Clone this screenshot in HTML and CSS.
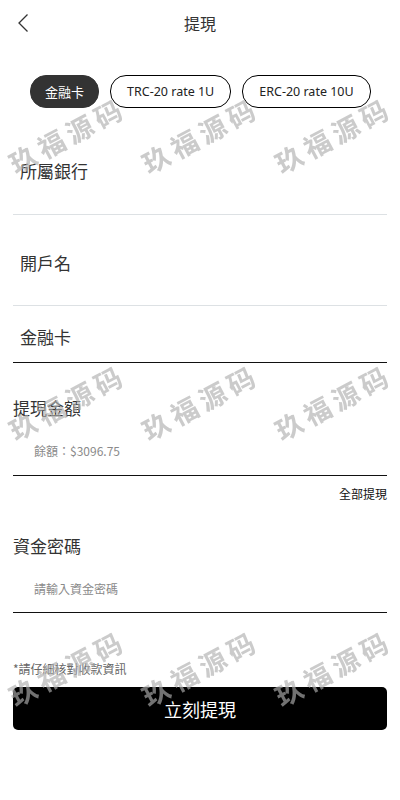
FILE: index.html
```html
<!DOCTYPE html>
<html lang="zh-Hant">
<head>
    <meta charset="UTF-8">
    <meta name="viewport" content="width=device-width, initial-scale=1.0">
    <title>提現</title>
    <link rel="stylesheet" href="styles.css">
</head>
<body>
    <div class="header">
        <a class="back" href="#">
            <svg width="14" height="20" viewBox="0 0 14 20">
                <path d="M10.5 1.5 L2 10 L10.5 18.5" fill="none" stroke="#333" stroke-width="1.3"/>
            </svg>
        </a>
        <div class="title">提現</div>
    </div>

    <div class="tabs">
        <div class="tab active">金融卡</div>
        <div class="tab">TRC-20 rate 1U</div>
        <div class="tab">ERC-20 rate 10U</div>
    </div>

    <div class="field field-bank">所屬銀行</div>
    <div class="field field-name">開戶名</div>
    <div class="field field-card">金融卡</div>

    <div class="section-label amount-label">提現金額</div>
    <div class="sub-input">餘額：$3096.75</div>
    <div class="all-link">全部提現</div>

    <div class="section-label pwd-label">資金密碼</div>
    <div class="sub-input">請輸入資金密碼</div>

    <div class="note">*請仔細核對收款資訊</div>
    <button class="submit">立刻提現</button>

    <div class="watermarks">
        <span>玖福源码</span><span>玖福源码</span><span>玖福源码</span>
        <span>玖福源码</span><span>玖福源码</span><span>玖福源码</span>
        <span>玖福源码</span><span>玖福源码</span><span>玖福源码</span>
    </div>
</body>
</html>
```

FILE: styles.css
```css
body {
    margin: 0;
    padding: 0 13px;
    background: #fff;
    color: #333;
    font-family: "Noto Sans CJK TC", "Noto Sans", sans-serif;
}

.header {
    position: relative;
    height: 46px;
    display: flex;
    align-items: center;
    justify-content: center;
}

.back {
    position: absolute;
    left: 4px;
    top: 13px;
    display: block;
    line-height: 0;
}

.title {
    font-size: 16px;
    color: #333;
}

.tabs {
    display: flex;
    gap: 11px;
    margin-top: 29px;
    padding-left: 17px;
}

.tab {
    height: 31px;
    line-height: 31px;
    padding: 0 16px;
    border: 1px solid #000;
    border-radius: 16px;
    font-size: 12.5px;
    color: #222;
    font-family: "Noto Sans", "Noto Sans CJK TC", sans-serif;
}

.tab.active {
    padding: 0 14px;
    background: #333;
    border-color: #333;
    color: #fff;
    font-size: 13px;
    font-family: "Noto Sans CJK TC", sans-serif;
}

.field {
    font-size: 17px;
    line-height: 24px;
    padding-left: 7px;
    color: #333;
    border-bottom: 1px solid #dde1e4;
}

.field-bank {
    padding-top: 51px;
    padding-bottom: 31px;
}

.field-name {
    padding-top: 36px;
    padding-bottom: 30px;
}

.field-card {
    padding-top: 19px;
    padding-bottom: 13px;
    border-bottom-color: #111;
}

.section-label {
    font-size: 17px;
    line-height: 24px;
    color: #333;
}

.amount-label {
    margin-top: 33px;
}

.pwd-label {
    margin-top: 31px;
}

.sub-input {
    margin-top: 22px;
    padding: 0 0 14px 21px;
    font-size: 12px;
    line-height: 18px;
    color: #8a8a8a;
    border-bottom: 1px solid #111;
}

.amount-label + .sub-input {
    padding-bottom: 15px;
}

.all-link {
    margin-top: 9px;
    text-align: right;
    font-size: 12px;
    line-height: 18px;
    color: #111;
}

.note {
    margin-top: 47px;
    font-size: 12px;
    line-height: 18px;
    color: #666;
}

.submit {
    display: block;
    width: 100%;
    height: 43px;
    margin-top: 9px;
    border: none;
    border-radius: 5px;
    background: #000;
    color: #fff;
    font-size: 18px;
    font-family: "Noto Sans CJK TC", sans-serif;
}

/* overlay watermark */
.watermarks {
    position: fixed;
    top: 0;
    left: 0;
    width: 400px;
    height: 800px;
    display: grid;
    grid-template-columns: repeat(3, 133px);
    grid-template-rows: 268px 266px 266px;
    align-items: center;
    justify-items: center;
    pointer-events: none;
}

.watermarks span {
    transform: rotate(-28deg);
    font-size: 27px;
    font-weight: bold;
    letter-spacing: 5px;
    white-space: nowrap;
    color: rgba(175, 175, 175, 0.65);
    font-family: "Noto Sans CJK SC", sans-serif;
}
```
